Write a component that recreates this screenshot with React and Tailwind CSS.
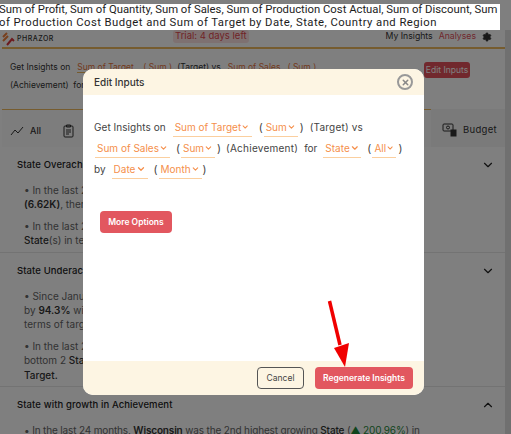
import React from "react";
import { ChevronDown, ChevronUp, Settings, X } from "lucide-react";

const font = { fontFamily: '"Inter","Open Sans",sans-serif' };

function Pick({ label, className }) {
  return (
    <span className={"inline-flex items-center justify-between h-[19px] border-b border-[#fbcf9f] text-[#f58f4b] px-[2px] whitespace-nowrap shrink-0 " + className}>
      {label}
      <ChevronDown size={10} strokeWidth={3} />
    </span>
  );
}

function Section({ title, open, children }) {
  return (
    <div className="border-b border-[#e7e7e7] px-[17px] pt-[9px] pb-[4px]">
      <div className="flex items-center justify-between h-[18px] text-[9.5px] font-medium text-[#222] tracking-[0.1px]">
        <span>{title}</span>
        {open ? <ChevronUp size={14} className="mr-[-1px]" /> : <ChevronDown size={14} className="mr-[-1px]" />}
      </div>
      <div className="mt-[9px] pl-[7px] text-[10px] leading-[14.4px] text-[#666] flex flex-col gap-[7px]">{children}</div>
    </div>
  );
}

export default function App() {
  return (
    <div className="relative w-[511px] h-[434px] overflow-hidden bg-white" style={font}>
      <div className="absolute inset-0">
        <div className="h-[30px]" />
        <div className="flex items-center h-[19px] border-b-2 border-[#edb95e] mx-[2px] pr-[17px]">
          <svg width="14" height="14" viewBox="0 0 14 14" fill="none" strokeWidth="2">
            <path d="M1 5 L5 1 M1 9 L6 4" stroke="#f0803c" />
            <path d="M5 13 L10 7 L12 9" stroke="#d9363e" />
          </svg>
          <span className="ml-[1px] mt-[2px] text-[7px] tracking-[0.5px] font-medium text-[#333]">PHRAZOR</span>
          <span className="ml-[119px] mb-[4px] w-[76px] h-[13px] rounded-[3px] bg-[#fde3e3] text-[#e2474e] text-[9.5px] flex items-center justify-center">Trial: 4 days left</span>
          <span className="ml-auto mb-[3px] text-[8.7px] text-[#333]">My Insights</span>
          <span className="ml-[6px] mb-[3px] text-[8.7px] text-[#e2505a]">Analyses</span>
          <Settings size={10} className="ml-[6px] mb-[3px] text-[#333]" fill="#333" />
        </div>
        <div className="flex justify-between pl-[10px] pr-[41px] pt-[9px] h-[60px] text-[8.5px] text-[#333]">
          <div className="leading-[18px]">
            <div className="flex whitespace-nowrap">
              <span>Get Insights on</span>
              <span className="ml-[7px] w-[57px] h-[15px] text-[#e8743b] border-b border-[#edb95e]">Sum of Target</span>
              <span className="ml-[9px] text-[#e8743b]">( Sum )</span>
              <span className="ml-[5px]">(Target) vs</span>
              <span className="ml-[7px] text-[#e8743b]">Sum of Sales</span>
              <span className="ml-[7px] text-[#e8743b]">( Sum )</span>
            </div>
            <div>(Achievement) &nbsp;for</div>
          </div>
          <span className="mt-[4px] w-[46px] h-[16px] rounded-[3px] bg-[#e2505a] text-white text-[8.5px] flex items-center justify-center">Edit Inputs</span>
        </div>
        <div className="mx-[2px] h-[38px] flex text-[9px] text-[#333]">
          <div className="w-[429px] border-t border-[#edb95e] bg-[#fafafa] flex items-center gap-[5px] pl-[8px] pt-[4px] font-medium">
            <svg width="15" height="10" viewBox="0 0 15 10" fill="none" stroke="#333"><path d="M1 9 L5 4 L8 7 L13 1" /></svg>
            <span>All</span>
            <svg className="ml-[17px]" width="11" height="14" viewBox="0 0 11 14" fill="none" stroke="#333"><rect x="1" y="2" width="9" height="11" rx="1" /><path d="M3.500 1h4v2h-4z M3 6h5 M3 8h5 M3 10h3" /></svg>
          </div>
          <div className="flex-1 bg-[#f5f5f5] flex items-center gap-[6px] pl-[11px] pt-[4px]">
            <svg width="15" height="14" viewBox="0 0 15 14" fill="none" stroke="#333"><rect x="1" y="1" width="10" height="7" rx="1" /><circle cx="6" cy="4.500" r="1.500" /><rect x="9" y="7" width="5" height="6" fill="#333" /></svg>
            <span className="text-[9.5px] tracking-[0.3px]">Budget</span>
          </div>
        </div>
        <Section title="State Overachievers">
          <div>
            <div>• In the last 24 months</div>
            <div><b className="font-semibold text-[#333]">(6.62K)</b>, there</div>
          </div>
          <div>
            <div>• In the last 24 months</div>
            <div><span className="font-medium text-[#333]">State</span>(s) in terms</div>
          </div>
        </Section>
        <Section title="State Underachievers">
          <div>
            <div>• Since January</div>
            <div>by <b className="font-semibold text-[#333]">94.3%</b> with</div>
            <div>terms of target</div>
          </div>
          <div>
            <div>• In the last 24 months</div>
            <div>bottom 2 <span className="font-medium text-[#333]">State</span></div>
            <div className="font-medium text-[#333]">Target.</div>
          </div>
        </Section>
        <Section title="State with growth in Achievement" open>
          <div className="whitespace-nowrap tracking-[-0.15px]">• In the last 24 months, <b className="font-semibold text-[#333]">Wisconsin</b> was the 2nd highest growing <span className="font-medium text-[#333]">State</span> (<span className="text-[#1f8a3b]">▲ 200.96%</span>) in</div>
        </Section>
      </div>

      <div className="absolute inset-0 bg-black/50" />

      <div className="absolute right-0 top-[30px] bottom-0 w-[6px] bg-[#707070]" />

      <div className="absolute left-0 top-[4px] w-[500px] h-[26px] bg-white text-[#1c1c1c] text-[11.3px] leading-[13px] whitespace-nowrap overflow-hidden" style={{ fontFamily: "Roboto, sans-serif" }}>
        <div className="ml-[-1px] mt-[-1px]">Sum of Profit, Sum of Quantity, Sum of Sales, Sum of Production Cost Actual, Sum of Discount, Sum</div>
        <div className="ml-[-1px] tracking-[0.45px]">of Production Cost Budget and Sum of Target by Date, State, Country and Region</div>
      </div>

      <div className="absolute left-[83px] top-[69px] w-[341px] h-[326px] rounded-[10px] bg-white overflow-hidden flex flex-col">
        <div className="h-[26px] shrink-0 bg-[#fdf5e3] flex items-center justify-between px-[11px]">
          <span className="text-[10px] font-medium text-[#333]">Edit Inputs</span>
          <span className="w-[16px] h-[16px] rounded-full border-2 border-[#999] flex items-center justify-center text-[#888]"><X size={9} strokeWidth={4} /></span>
        </div>
        <div className="flex-1 pl-[11px] pr-[20px] pt-[22px] text-[#444] text-[10px] whitespace-nowrap">
          <div className="flex items-center h-[21px]">
            <span className="tracking-[0.05px]">Get Insights on</span>
            <Pick label="Sum of Target" className="ml-[7px] w-[79px]" />
            <span className="ml-[7px] text-[11px]">(</span>
            <Pick label="Sum" className="ml-[1px] w-[34px]" />
            <span className="ml-[2px] text-[11px]">)</span>
            <span className="ml-[6px] tracking-[0.2px]">(Target) vs</span>
          </div>
          <div className="flex items-center h-[21px]">
            <Pick label="Sum of Sales" className="ml-[1px] w-[75px]" />
            <span className="ml-[6px] text-[11px]">(</span>
            <Pick label="Sum" className="ml-[1px] w-[34px]" />
            <span className="ml-[2px] text-[11px]">)</span>
            <span className="ml-[5px] tracking-[0.25px]">(Achievement)</span>
            <span className="ml-[6px]">for</span>
            <Pick label="State" className="ml-[6px] w-[38px]" />
            <span className="ml-[6px] text-[11px]">(</span>
            <Pick label="All" className="ml-[1px] w-[24px]" />
            <span className="ml-[2px] text-[11px]">)</span>
          </div>
          <div className="flex items-center h-[21px]">
            <span>by</span>
            <Pick label="Date" className="ml-[6px] w-[36px]" />
            <span className="ml-[6px] text-[11px]">(</span>
            <Pick label="Month" className="ml-[1px] w-[43px]" />
            <span className="ml-[1px] text-[11px]">)</span>
          </div>
          <div className="mt-[31px] ml-[6px] w-[72px] h-[22px] rounded-[4px] bg-[#e2575f] text-white text-[8.5px] font-semibold flex items-center justify-center">More Options</div>
        </div>
        <div className="h-[34px] shrink-0 bg-[#fdf5e3] flex items-center justify-end gap-[11px] pr-[11px]">
          <span className="w-[47px] h-[22px] rounded-[4px] border border-[#555] text-[#444] text-[8.5px] flex items-center justify-center">Cancel</span>
          <span className="w-[98px] h-[22px] rounded-[4px] bg-[#e2575f] text-white text-[8.5px] font-semibold flex items-center justify-center">Regenerate Insights</span>
        </div>
      </div>

      <svg className="absolute left-[320px] top-[295px]" width="40" height="75" viewBox="0 0 40 75">
        <path d="M9.500 6 L20 50" stroke="#f00000" strokeWidth="3.500" fill="none" />
        <path d="M14 53 L29 48 L25 72 Z" fill="#f00000" />
      </svg>
    </div>
  );
}
